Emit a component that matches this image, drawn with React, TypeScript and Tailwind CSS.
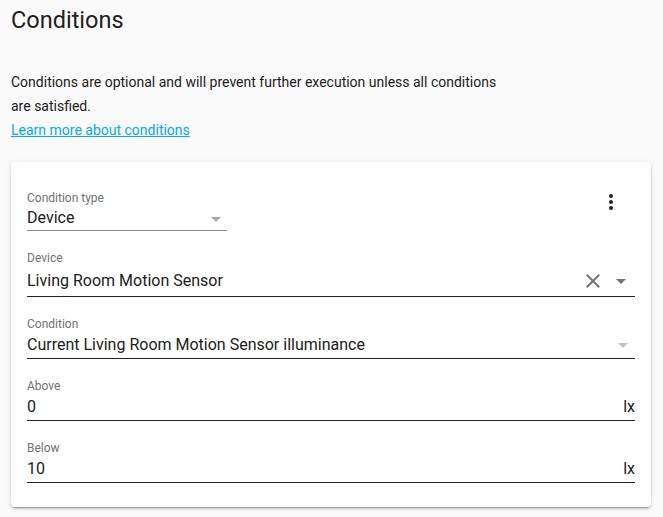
import React from "react";

const Arrow = ({ color, className }: { color: string; className: string }) => (
  <svg width="10" height="5" viewBox="0 0 10 5" className={className}>
    <path d="M0 0 L10 0 L5 5 Z" fill={color} />
  </svg>
);

const Label = ({ children }: { children: React.ReactNode }) => (
  <div className="box-border h-[16px] pt-[1px] text-[12px] leading-[15px] text-[#727272]">{children}</div>
);

export default function App() {
  return (
    <div className="min-h-[517px] w-[663px] bg-[#fafafa] text-[#212121]" style={{ fontFamily: "Roboto, 'Noto Sans', sans-serif" }}>
      <div className="pl-[11px] pt-[4px]">
        <h1 className="text-[23.5px] leading-[32px] font-normal text-[#212121]">Conditions</h1>
        <p className="mt-[34px] w-[496px] text-[14px] leading-[24px] text-[#212121]">
          Conditions are optional and will prevent further execution unless all conditions are satisfied.
        </p>
        <a href="#" className="block text-[14px] leading-[24px] text-[#03a9f4] underline">
          Learn more about conditions
        </a>
      </div>
      <div className="ml-[11px] mt-[20px] w-[640px] rounded-[4px] bg-white px-[16px] pt-[28px] pb-[24px] shadow-[0_2px_2px_0_rgba(0,0,0,0.14),0_1px_5px_0_rgba(0,0,0,0.12),0_3px_1px_-2px_rgba(0,0,0,0.2)] relative">
        <button className="absolute left-[588px] top-[28px] flex h-[24px] w-[24px] items-center justify-center">
          <svg width="24" height="24" viewBox="0 0 24 24">
            <path fill="#212121" d="M12,16A2,2 0 0,1 14,18A2,2 0 0,1 12,20A2,2 0 0,1 10,18A2,2 0 0,1 12,16M12,10A2,2 0 0,1 14,12A2,2 0 0,1 12,14A2,2 0 0,1 10,12A2,2 0 0,1 12,10M12,4A2,2 0 0,1 14,6A2,2 0 0,1 12,8A2,2 0 0,1 10,6A2,2 0 0,1 12,4Z" />
          </svg>
        </button>

        {/* Condition type */}
        <div className="w-[200px]">
          <Label>Condition type</Label>
          <div className="box-border flex h-[25px] items-start justify-between border-b border-[#8c8c8c] text-[16px] leading-[24px]">
            <span>Device</span>
            <Arrow color="#a8a8a8" className="mr-[6px] mt-[11px]" />
          </div>
        </div>

        {/* Device */}
        <div className="mt-[19px]">
          <Label>Device</Label>
          <div className="box-border flex h-[31px] items-start border-b border-[#212121] pt-[3px] text-[16px] leading-[24px]">
            <span className="flex-1">Living Room Motion Sensor</span>
            <svg width="24" height="24" viewBox="0 0 24 24" className="mr-[11px]">
              <path fill="#757575" d="M19,6.41L17.59,5L12,10.59L6.41,5L5,6.41L10.59,12L5,17.59L6.41,19L12,13.41L17.59,19L19,17.59L13.41,12L19,6.41Z" />
            </svg>
            <Arrow color="#757575" className="mr-[9px] mt-[10px]" />
          </div>
        </div>

        {/* Condition */}
        <div className="mt-[19px]">
          <Label>Condition</Label>
          <div className="box-border flex h-[27px] items-start justify-between border-b border-[#212121] pt-[1px] text-[16px] leading-[24px]">
            <span>Current Living Room Motion Sensor illuminance</span>
            <Arrow color="#c4c4c4" className="mr-[7px] mt-[10px]" />
          </div>
        </div>

        {/* Above */}
        <div className="mt-[19px]">
          <Label>Above</Label>
          <div className="box-border flex h-[27px] items-start justify-between border-b border-[#212121] pt-[1px] text-[16px] leading-[24px]">
            <span>0</span>
            <span>lx</span>
          </div>
        </div>

        {/* Below */}
        <div className="mt-[19px]">
          <Label>Below</Label>
          <div className="box-border flex h-[27px] items-start justify-between border-b border-[#212121] pt-[1px] text-[16px] leading-[24px]">
            <span>10</span>
            <span>lx</span>
          </div>
        </div>
      </div>
    </div>
  );
}
